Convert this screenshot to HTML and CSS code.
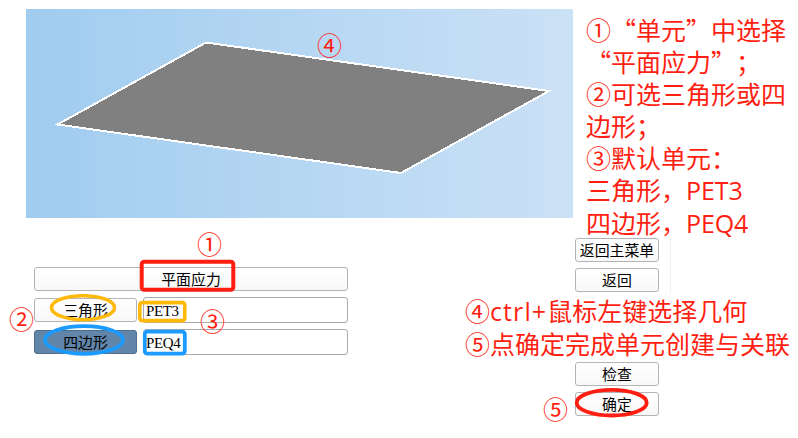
FILE: index.html
```html
<!DOCTYPE html>
<html lang="zh-CN">
<head>
<meta charset="utf-8">
<title>平面应力单元</title>
<link rel="stylesheet" href="styles.css">
</head>
<body>
<main class="page">
  <section class="top">
    <svg class="scene" viewBox="0 0 547 209">
      <defs>
        <linearGradient id="sky"><stop offset="0" stop-color="#a0ccef"/><stop offset="1" stop-color="#cbe1f6"/></linearGradient>
      </defs>
      <rect width="547" height="209" fill="url(#sky)"/>
      <polygon points="31.5,115.5 180,33.5 523,82 375,164" fill="#808080" stroke="#fff" stroke-width="2" shape-rendering="crispEdges"/>
    </svg>
    <div class="notes">
      <p>①“单元”中选择</p>
      <p>“平面应力”；</p>
      <p>②可选三角形或四</p>
      <p>边形；</p>
      <p>③默认单元：</p>
      <p>三角形，<span class="latin">PET3</span></p>
      <p>四边形，<span class="latin">PEQ4</span></p>
    </div>
  </section>
  <section class="bottom">
    <div class="form">
      <button class="btn wide">平面应力</button>
      <div class="row"><button class="btn kind">三角形</button><div class="field">PET3</div></div>
      <div class="row"><button class="btn kind active">四边形</button><div class="field">PEQ4</div></div>
    </div>
    <div class="side">
      <div class="group first"><button class="btn">返回主菜单</button><button class="btn">返回</button></div>
      <div class="notes lower">
        <p>④<span class="latin ctrl">ctrl+</span>鼠标左键选择几何</p>
        <p>⑤点确定完成单元创建与关联</p>
      </div>
      <div class="group"><button class="btn">检查</button><button class="btn">确定</button></div>
    </div>
  </section>
  <svg class="marks" viewBox="0 0 798 438">
    <rect x="141.7" y="261.7" width="91.6" height="28" rx="2.5" stroke="#ff1f12" stroke-width="4"/>
    <ellipse cx="83" cy="307.7" rx="31.5" ry="12" stroke="#ffb90a" stroke-width="3.5"/>
    <rect x="139.8" y="302.6" width="45" height="18" rx="2.5" stroke="#ffb90a" stroke-width="3.6"/>
    <ellipse cx="84" cy="340" rx="39" ry="13.8" stroke="#1b9aff" stroke-width="3.8"/>
    <rect x="144.8" y="331.6" width="40" height="22" rx="2.5" stroke="#1b9aff" stroke-width="3.8"/>
    <ellipse cx="611.7" cy="402.7" rx="35" ry="12.8" stroke="#ff1f12" stroke-width="3.8"/>
  </svg>
  <span class="tag tag-1">①</span>
  <span class="tag tag-2">②</span>
  <span class="tag tag-3">③</span>
  <span class="tag tag-4">④</span>
  <span class="tag tag-5">⑤</span>
</main>
</body>
</html>
```
FILE: styles.css
```css
* { box-sizing: border-box; }
body { margin: 0; background: #fff; }
p { margin: 0; }
.page {
  position: relative;
  width: 798px;
  height: 438px;
  overflow: hidden;
  font-family: "Noto Sans CJK SC", sans-serif;
}
.top { display: flex; height: 238px; padding: 9px 0 0 26px; }
.scene { width: 547px; height: 209px; flex: none; display: block; }
.notes {
  font-size: 25px;
  line-height: 32px;
  color: #ff1f12;
  white-space: nowrap;
  text-spacing-trim: space-all;
}
.top .notes { margin: 4px 0 0 13px; }
.latin { font-family: "Open Sans", sans-serif; letter-spacing: -0.1px; }
.ctrl { letter-spacing: 1.1px; }
.bottom { display: flex; height: 200px; }
.form {
  display: flex;
  flex-direction: column;
  gap: 6px;
  width: 465px;
  padding: 29px 117px 0 34px;
}
.row { display: flex; align-items: center; gap: 6px; height: 26px; }
.btn {
  width: 84px;
  height: 24px;
  padding: 0 0 1px;
  border: 1px solid #b4b4b4;
  border-radius: 3px;
  background: linear-gradient(#fff, #f8f8f8);
  font: 14.9px/20px "Noto Sans CJK SC", sans-serif;
  color: #000;
  white-space: nowrap;
}
.wide { width: 314px; }
.kind { width: 103px; }
.active { background: #6186aa; border-color: #4c6d8d; }
.field {
  flex: 1;
  height: 26px;
  padding-left: 2px;
  border: 1px solid #aaa;
  border-radius: 3px;
  font: 15px/26px "Liberation Serif", serif;
  letter-spacing: -0.4px;
}
.side { width: 333px; }
.group {
  display: flex;
  flex-direction: column;
  gap: 6px;
  margin-left: 110px;
}
.first { width: 96px; height: 56px; border-right: 1px solid #f1f1f1; }
.lower { height: 68px; }
.marks { position: absolute; inset: 0; width: 798px; height: 438px; fill: none; pointer-events: none; }
.tag { position: absolute; font-size: 25px; line-height: 32px; color: #ff1f12; }
.tag-1 { left: 197px; top: 227px; }
.tag-2 { left: 9px; top: 302px; }
.tag-3 { left: 200px; top: 304px; }
.tag-4 { left: 317px; top: 28px; }
.tag-5 { left: 543px; top: 392px; }
```
